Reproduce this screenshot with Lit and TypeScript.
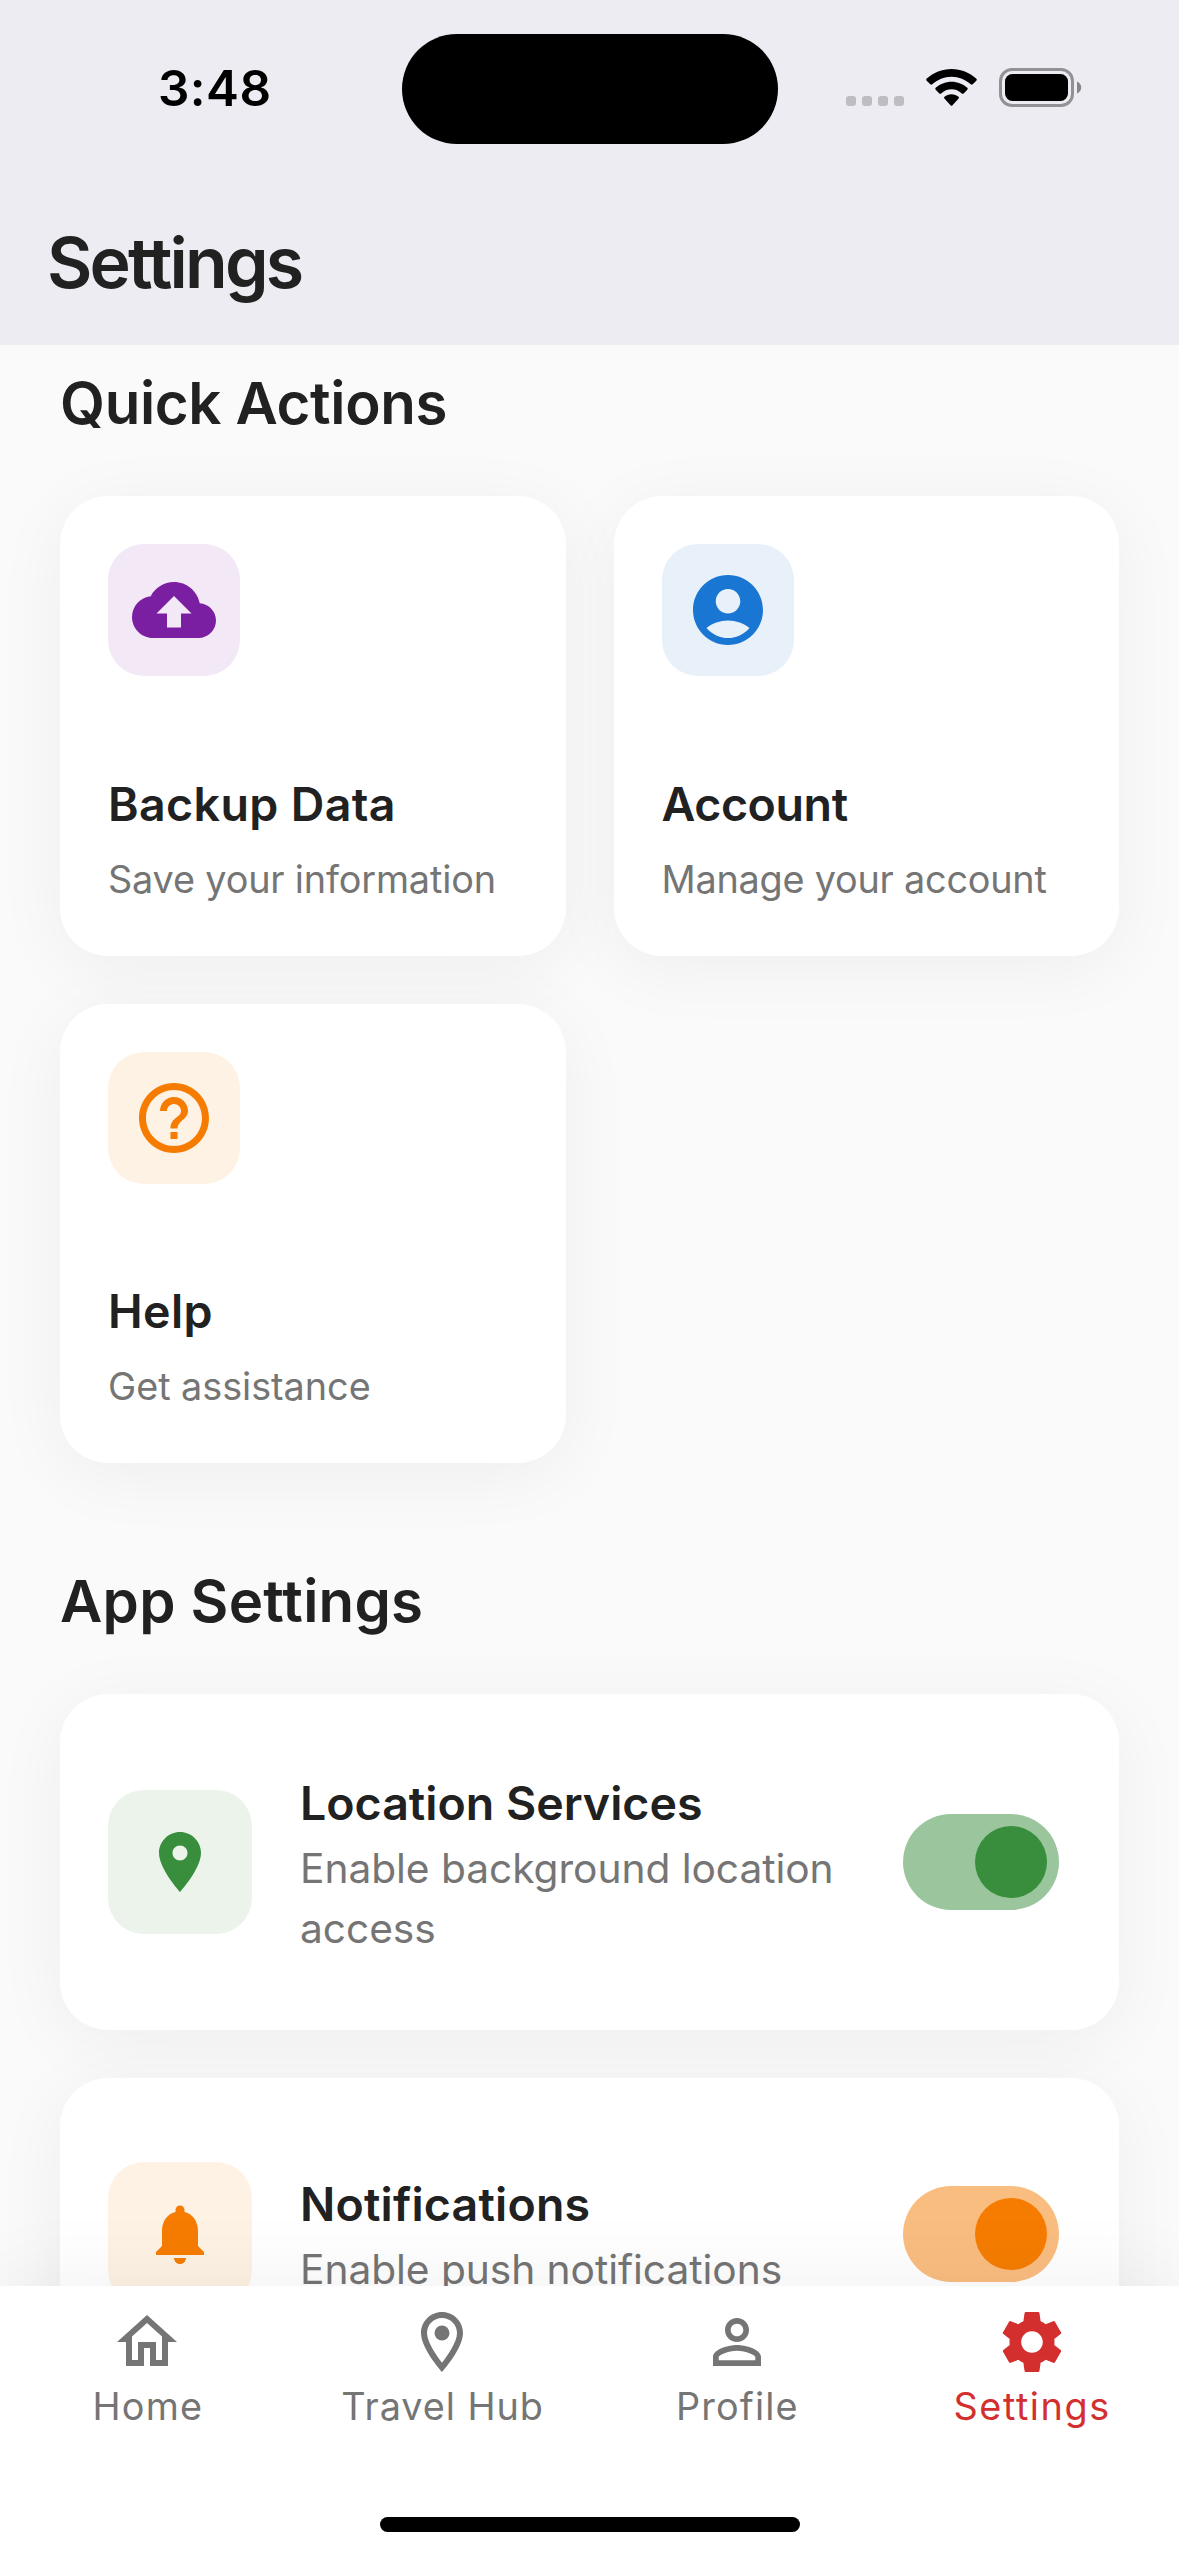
import { LitElement, html, css, svg, type SVGTemplateResult } from "lit";
import { customElement, property } from "lit/decorators.js";
import { classMap } from "lit/directives/class-map.js";
import { styleMap } from "lit/directives/style-map.js";

const ICONS: Record<string, SVGTemplateResult> = {
  cloudUpload: svg`<path d="M19.35 10.04C18.67 6.59 15.64 4 12 4 9.11 4 6.6 5.64 5.35 8.04 2.34 8.36 0 10.91 0 14c0 3.31 2.69 6 6 6h13c2.76 0 5-2.24 5-5 0-2.64-2.05-4.78-4.65-4.96zM14 13v4h-4v-4H7l5-5 5 5h-3z"/>`,
  accountCircle: svg`<path d="M12 2C6.48 2 2 6.48 2 12s4.48 10 10 10 10-4.48 10-10S17.52 2 12 2zm0 4c1.93 0 3.5 1.57 3.5 3.5S13.93 13 12 13s-3.5-1.57-3.5-3.5S10.07 6 12 6zm0 14c-2.03 0-4.43-.82-6.14-2.88C7.55 15.8 9.68 15 12 15s4.45.8 6.14 2.12C16.43 19.18 14.03 20 12 20z"/>`,
  help: svg`<path d="M11 18h2v-2h-2v2zm1-16C6.48 2 2 6.48 2 12s4.48 10 10 10 10-4.48 10-10S17.52 2 12 2zm0 18c-4.41 0-8-3.59-8-8s3.59-8 8-8 8 3.59 8 8-3.59 8-8 8zm0-14c-2.21 0-4 1.79-4 4h2c0-1.1.9-2 2-2s2 .9 2 2c0 2-3 1.75-3 5h2c0-2.25 3-2.5 3-5 0-2.21-1.79-4-4-4z"/>`,
  place: svg`<path d="M12 2C8.13 2 5 5.13 5 9c0 5.25 7 13 7 13s7-7.75 7-13c0-3.87-3.13-7-7-7zm0 9.5c-1.38 0-2.5-1.12-2.5-2.5s1.12-2.5 2.5-2.5 2.5 1.12 2.5 2.5-1.12 2.5-2.5 2.5z"/>`,
  bell: svg`<path d="M12 22c1.1 0 2-.9 2-2h-4c0 1.1.89 2 2 2zm6-6v-5c0-3.07-1.64-5.64-4.5-6.32V4c0-.83-.67-1.5-1.5-1.5s-1.5.67-1.5 1.5v.68C7.63 5.36 6 7.92 6 11v5l-2 2v1h16v-1l-2-2z"/>`,
  home: svg`<path d="M12 5.69l5 4.5V18h-2v-6H9v6H7v-7.81l5-4.5M12 3L2 12h3v8h6v-6h2v6h6v-8h3L12 3z"/>`,
  placeOutlined: svg`<path d="M12 2C8.13 2 5 5.13 5 9c0 5.25 7 13 7 13s7-7.75 7-13c0-3.87-3.13-7-7-7zM7 9c0-2.76 2.24-5 5-5s5 2.24 5 5c0 2.88-2.88 7.19-5 9.88C9.92 16.21 7 11.85 7 9z"/><circle cx="12" cy="9" r="2.5"/>`,
  person: svg`<path d="M12 5.9c1.16 0 2.1.94 2.1 2.1s-.94 2.1-2.1 2.1S9.9 9.16 9.9 8s.94-2.1 2.1-2.1m0 9c2.97 0 6.1 1.46 6.1 2.1v1.1H5.9V17c0-.64 3.13-2.1 6.1-2.1M12 4C9.79 4 8 5.79 8 8s1.79 4 4 4 4-1.79 4-4-1.79-4-4-4zm0 9c-2.67 0-8 1.34-8 4v3h16v-3c0-2.66-5.33-4-8-4z"/>`,
  gear: svg`<path d="M19.43 12.98c.04-.32.07-.64.07-.98s-.03-.66-.07-.98l2.11-1.65c.19-.15.24-.42.12-.64l-2-3.46c-.12-.22-.39-.3-.61-.22l-2.49 1c-.52-.4-1.08-.73-1.69-.98l-.38-2.65C14.46 2.18 14.25 2 14 2h-4c-.25 0-.46.18-.49.42l-.38 2.65c-.61.25-1.17.59-1.69.98l-2.49-1c-.23-.09-.49 0-.61.22l-2 3.46c-.13.22-.07.49.12.64l2.11 1.65c-.04.32-.07.65-.07.98s.03.66.07.98l-2.11 1.65c-.19.15-.24.42-.12.64l2 3.46c.12.22.39.3.61.22l2.49-1c.52.4 1.08.73 1.69.98l.38 2.65c.03.24.24.42.49.42h4c.25 0 .46-.18.49-.42l.38-2.65c.61-.25 1.17-.59 1.69-.98l2.49 1c.23.09.49 0 .61-.22l2-3.46c.12-.22.07-.49-.12-.64l-2.11-1.65zM12 15.6c-1.98 0-3.6-1.62-3.6-3.6s1.62-3.6 3.6-3.6 3.6 1.62 3.6 3.6-1.62 3.6-3.6 3.6z"/>`,
};

/** A label with its own letter spacing, in pixels. */
interface Label {
  text: string;
  tracking: number;
}

const label = (cls: string, l: Label) =>
  html`<div class=${cls} style=${styleMap({ letterSpacing: `${l.tracking}px` })}>${l.text}</div>`;

@customElement("ui-icon")
class UiIcon extends LitElement {
  @property() name = "";
  static styles = css`
    :host { display: block; flex: none; }
    svg { display: block; width: 100%; height: 100%; fill: currentColor; }
  `;
  render() {
    return html`<svg viewBox="0 0 24 24">${ICONS[this.name]}</svg>`;
  }
}

@customElement("status-bar")
class StatusBar extends LitElement {
  static styles = css`
    :host { display: grid; grid-template-columns: 401.5px 376px 1fr; height: 177px; }
    .time {
      display: flex; justify-content: center; padding: 58px 0 0 28px;
      font-size: 49.4px; font-weight: 600; line-height: 60px; color: #000; letter-spacing: 0.5px;
    }
    .island { margin-top: 34px; height: 110px; border-radius: 55px; background: #000; }
    .system { display: flex; align-items: flex-start; padding: 68px 0 0 68.5px; }
    .dots { display: flex; gap: 6px; padding-top: 28px; }
    .dot { width: 10px; height: 10px; border-radius: 3px; background: #bebdc2; }
    .wifi { display: block; width: 51px; height: 38px; margin: 1px 0 0 22px; }
    .battery { display: block; width: 83px; height: 39px; margin-left: 22px; }
  `;
  render() {
    return html`
      <div class="time">3:48</div>
      <div class="island"></div>
      <div class="system">
        <div class="dots">${[0, 1, 2, 3].map(() => html`<div class="dot"></div>`)}</div>
        <svg class="wifi" viewBox="0 0 51 38">
          <path d="M25.5 0C35 0 43.6 3.6 50.2 9.6Q51.3 10.6 50.3 11.7L46.7 15.3Q45.8 16.2 44.8 15.3C39.6 10.6 32.9 7.7 25.5 7.7C18.1 7.7 11.4 10.6 6.2 15.3Q5.2 16.2 4.3 15.3L.7 11.7Q-.3 10.6 .8 9.6C7.4 3.6 16 0 25.5 0Z"/>
          <path d="M25.5 12.7C31.6 12.7 37.1 15 41.3 18.8Q42.3 19.8 41.3 20.8L37.7 24.4Q36.8 25.3 35.8 24.4C33 21.9 29.4 20.3 25.5 20.3C21.6 20.3 18 21.9 15.2 24.4Q14.2 25.3 13.3 24.4L9.7 20.8Q8.7 19.8 9.7 18.8C13.9 15 19.4 12.7 25.5 12.7Z"/>
          <path d="M25.5 25.3C28.2 25.3 30.6 26.2 32.5 27.7Q33.5 28.7 32.6 29.6L26.5 36.3Q25.5 37.3 24.5 36.3L18.4 29.6Q17.5 28.7 18.5 27.7C20.4 26.2 22.8 25.3 25.5 25.3Z"/>
        </svg>
        <svg class="battery" viewBox="0 0 83 39">
          <rect x="1.5" y="1.5" width="72" height="36" rx="11.5" fill="none" stroke="#929196" stroke-width="3"/>
          <rect x="6" y="6" width="63" height="27" rx="7.5"/>
          <path d="M78 13.5V25.5C80.6 24.4 82.2 22.1 82.2 19.5C82.2 16.9 80.6 14.6 78 13.5Z" fill="#86858a"/>
        </svg>
      </div>
    `;
  }
}

interface QuickAction {
  icon: string;
  color: string;
  title: Label;
  subtitle: Label;
}

@customElement("action-card")
class ActionCard extends LitElement {
  @property({ attribute: false }) item!: QuickAction;
  static styles = css`
    :host {
      display: flex; flex-direction: column; box-sizing: border-box; height: 459.5px; padding: 48px 48px 48.4px;
      border-radius: 48px; background: #fff; box-shadow: 0 12px 72px rgba(0, 0, 0, 0.05);
    }
    .tile {
      display: flex; align-items: center; justify-content: center; width: 132px; height: 132px;
      border-radius: 36px;
    }
    .tile ui-icon { width: 84px; height: 84px; }
    .purple { color: #7b1fa2; background: #f2e8f6; }
    .blue { color: #1976d2; background: #e8f0fa; }
    .orange { color: #f57c00; background: #fef2e5; }
    .title {
      margin-top: auto; font-size: 46.5px; font-weight: 600; line-height: 60px; color: #212121; white-space: nowrap;
    }
    .subtitle { margin-top: 17px; font-size: 37.8px; line-height: 56.5px; color: #757575; white-space: nowrap; }
  `;
  render() {
    const { icon, color, title, subtitle } = this.item;
    return html`
      <div class=${classMap({ tile: true, [color]: true })}><ui-icon name=${icon}></ui-icon></div>
      ${label("title", title)} ${label("subtitle", subtitle)}
    `;
  }
}

interface Setting extends QuickAction {
  size: string;
}

@customElement("setting-card")
class SettingCard extends LitElement {
  @property({ attribute: false }) item!: Setting;
  static styles = css`
    :host { display: block; }
    .card {
      display: flex; align-items: center; gap: 48px; box-sizing: border-box; padding: 0 60px 0 48px;
      border-radius: 48px; background: #fff; box-shadow: 0 12px 72px rgba(0, 0, 0, 0.05);
    }
    .tall { height: 336px; }
    .short { height: 312px; }
    .tile {
      display: flex; flex: none; align-items: center; justify-content: center; width: 144px; height: 144px;
      border-radius: 36px;
    }
    .tile ui-icon { width: 72px; height: 72px; }
    .copy { flex: 1; }
    .tall .copy { padding-top: 1px; }
    .title { font-size: 46.5px; font-weight: 600; line-height: 72px; color: #212121; }
    .subtitle { font-size: 40.7px; line-height: 60px; color: #757575; }
    .switch {
      display: flex; flex: none; align-items: center; justify-content: flex-end; box-sizing: border-box;
      width: 156px; height: 96px; padding: 12px; border-radius: 48px;
    }
    .thumb { width: 72px; height: 72px; border-radius: 50%; background: currentColor; }
    .green { color: #388e3c; }
    .orange { color: #f57c00; }
    .tile.green { background: #ebf3eb; }
    .tile.orange { background: #fef2e5; }
    .switch.green { background: #9bc69d; }
    .switch.orange { background: #fabd80; }
  `;
  render() {
    const { icon, color, title, subtitle, size } = this.item;
    return html`
      <div class=${classMap({ card: true, [size]: true })}>
        <div class=${classMap({ tile: true, [color]: true })}><ui-icon name=${icon}></ui-icon></div>
        <div class="copy">${label("title", title)} ${label("subtitle", subtitle)}</div>
        <div class=${classMap({ switch: true, [color]: true })}><div class="thumb"></div></div>
      </div>
    `;
  }
}

interface Tab {
  icon: string;
  label: Label;
  active?: boolean;
}

@customElement("tab-bar")
class TabBar extends LitElement {
  @property({ attribute: false }) tabs: Tab[] = [];
  static styles = css`
    :host {
      display: flex; flex: none; flex-direction: column; align-items: center; justify-content: space-between;
      box-sizing: border-box; position: relative; height: 270px; padding: 20px 0 24px; background: #fff;
      box-shadow: 0 -12px 72px rgba(0, 0, 0, 0.05);
    }
    .tabs { display: grid; grid-template-columns: repeat(4, 1fr); width: 100%; }
    .tab { display: flex; flex-direction: column; align-items: center; gap: 4px; color: #757575; }
    .active { color: #d32f2f; }
    .tab ui-icon { width: 72px; height: 72px; }
    .name { padding-left: 1px; font-size: 37.8px; line-height: 48px; white-space: nowrap; }
    .indicator { width: 420px; height: 15px; border-radius: 8px; background: #000; }
  `;
  render() {
    return html`
      <div class="tabs">
        ${this.tabs.map(
          (t) => html`<div class=${classMap({ tab: true, active: !!t.active })}>
            <ui-icon name=${t.icon}></ui-icon>${label("name", t.label)}
          </div>`,
        )}
      </div>
      <div class="indicator"></div>
    `;
  }
}

const ACTIONS: QuickAction[] = [
  {
    icon: "cloudUpload", color: "purple",
    title: { text: "Backup Data", tracking: 0.38 },
    subtitle: { text: "Save your information", tracking: -0.16 },
  },
  {
    icon: "accountCircle", color: "blue",
    title: { text: "Account", tracking: -0.4 },
    subtitle: { text: "Manage your account", tracking: -0.22 },
  },
  {
    icon: "help", color: "orange",
    title: { text: "Help", tracking: 0.42 },
    subtitle: { text: "Get assistance", tracking: -0.04 },
  },
];

const SETTINGS: Setting[] = [
  {
    icon: "place", color: "green", size: "tall",
    title: { text: "Location Services", tracking: 0 },
    subtitle: { text: "Enable background location access", tracking: -0.05 },
  },
  {
    icon: "bell", color: "orange", size: "short",
    title: { text: "Notifications", tracking: 0.19 },
    subtitle: { text: "Enable push notifications", tracking: -0.05 },
  },
];

const TABS: Tab[] = [
  { icon: "home", label: { text: "Home", tracking: 1.25 } },
  { icon: "placeOutlined", label: { text: "Travel Hub", tracking: 0.95 } },
  { icon: "person", label: { text: "Profile", tracking: 1.15 } },
  { icon: "gear", label: { text: "Settings", tracking: 1.55 }, active: true },
];

@customElement("app-root")
class AppRoot extends LitElement {
  static styles = css`
    :host {
      display: flex; flex-direction: column; width: 1179px; height: 2556px; overflow: hidden;
      background: #fafafa; font-family: Inter, "Liberation Sans", sans-serif;
    }
    .header { flex: none; height: 345px; background: #edecf2; }
    .app-bar {
      display: flex; align-items: center; box-sizing: border-box; height: 168px; padding: 3px 0 0 47px;
      font-size: 69.8px; font-weight: 600; letter-spacing: -2.8px; color: #212121;
    }
    .content { flex: 1; min-height: 0; overflow: hidden; padding: 0 60px; }
    .heading { padding: 21.5px 0 57.5px; font-size: 58.2px; font-weight: 600; line-height: 72px; color: #212121; }
    .settings-heading { padding-top: 101.5px; }
    .grid { display: grid; grid-template-columns: 1fr 1fr; gap: 48px; }
    .list { display: flex; flex-direction: column; gap: 48px; }
  `;
  render() {
    return html`
      <div class="header">
        <status-bar></status-bar>
        <div class="app-bar">Settings</div>
      </div>
      <div class="content">
        ${label("heading", { text: "Quick Actions", tracking: -0.35 })}
        <div class="grid">${ACTIONS.map((a) => html`<action-card .item=${a}></action-card>`)}</div>
        ${label("heading settings-heading", { text: "App Settings", tracking: 0.25 })}
        <div class="list">${SETTINGS.map((s) => html`<setting-card .item=${s}></setting-card>`)}</div>
      </div>
      <tab-bar .tabs=${TABS}></tab-bar>
    `;
  }
}
